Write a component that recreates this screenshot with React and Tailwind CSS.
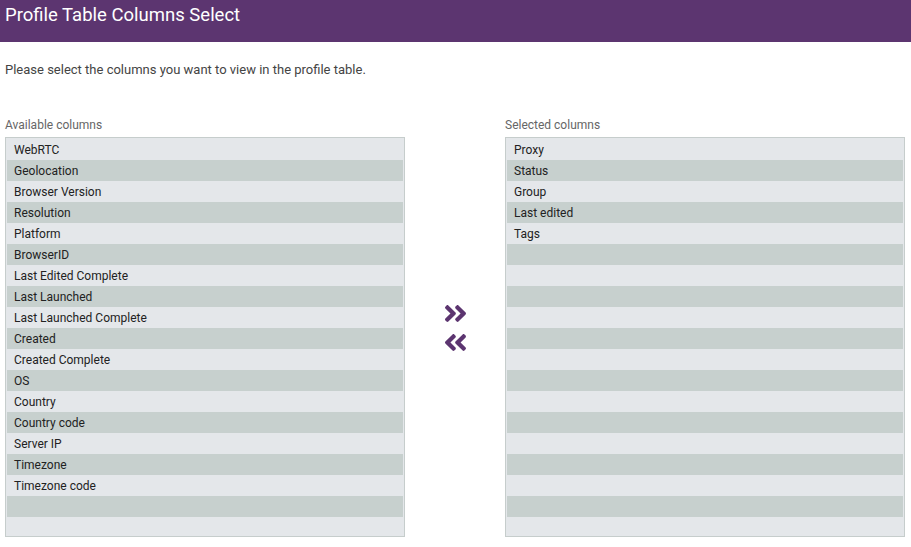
import { FaAngleDoubleRight, FaAngleDoubleLeft } from 'react-icons/fa'

const available = [
  'WebRTC',
  'Geolocation',
  'Browser Version',
  'Resolution',
  'Platform',
  'BrowserID',
  'Last Edited Complete',
  'Last Launched',
  'Last Launched Complete',
  'Created',
  'Created Complete',
  'OS',
  'Country',
  'Country code',
  'Server IP',
  'Timezone',
  'Timezone code',
]

const selected = ['Proxy', 'Status', 'Group', 'Last edited', 'Tags']

const ROWS = 19

function ColumnList({ label, items }) {
  const rows = Array.from({ length: ROWS }, (_, i) => items[i] ?? '')
  return (
    <div className="w-[400px]">
      <div className="text-[12px] text-[#666] h-[16px] leading-[16px] mb-[4px]">{label}</div>
      <div className="h-[400px] overflow-hidden border border-[#c6cdcc] bg-[#e4e7ea] p-px">
        {rows.map((name, i) => (
          <div
            key={i}
            className={`h-[21px] pt-px leading-[20px] pl-[7px] text-[12px] text-[#222] ${i % 2 === 1 ? 'bg-[#c7d0ce]' : 'bg-[#e4e7ea]'}`}
          >
            {name}
          </div>
        ))}
      </div>
    </div>
  )
}

export default function App() {
  return (
    <div className="w-[911px] h-[547px] bg-white font-['Roboto',sans-serif] overflow-hidden">
      {/* Header */}
      <div className="h-[42px] bg-[#5c3570] px-[5px] pt-[3px]">
        <div className="text-[18.5px] leading-[24px] text-white">Profile Table Columns Select</div>
      </div>

      <div className="px-[5px]">
        <p className="mt-[19px] text-[13px] leading-[18px] text-[#444]">
          Please select the columns you want to view in the profile table.
        </p>

        <div className="flex mt-[38px]">
          <ColumnList label="Available columns" items={available} />

          {/* Move buttons */}
          <div className="w-[100px] flex flex-col items-center gap-[2px] pt-[183px] text-[#5c3570]">
            <FaAngleDoubleRight size={27} />
            <FaAngleDoubleLeft size={27} />
          </div>

          <ColumnList label="Selected columns" items={selected} />
        </div>
      </div>
    </div>
  )
}
